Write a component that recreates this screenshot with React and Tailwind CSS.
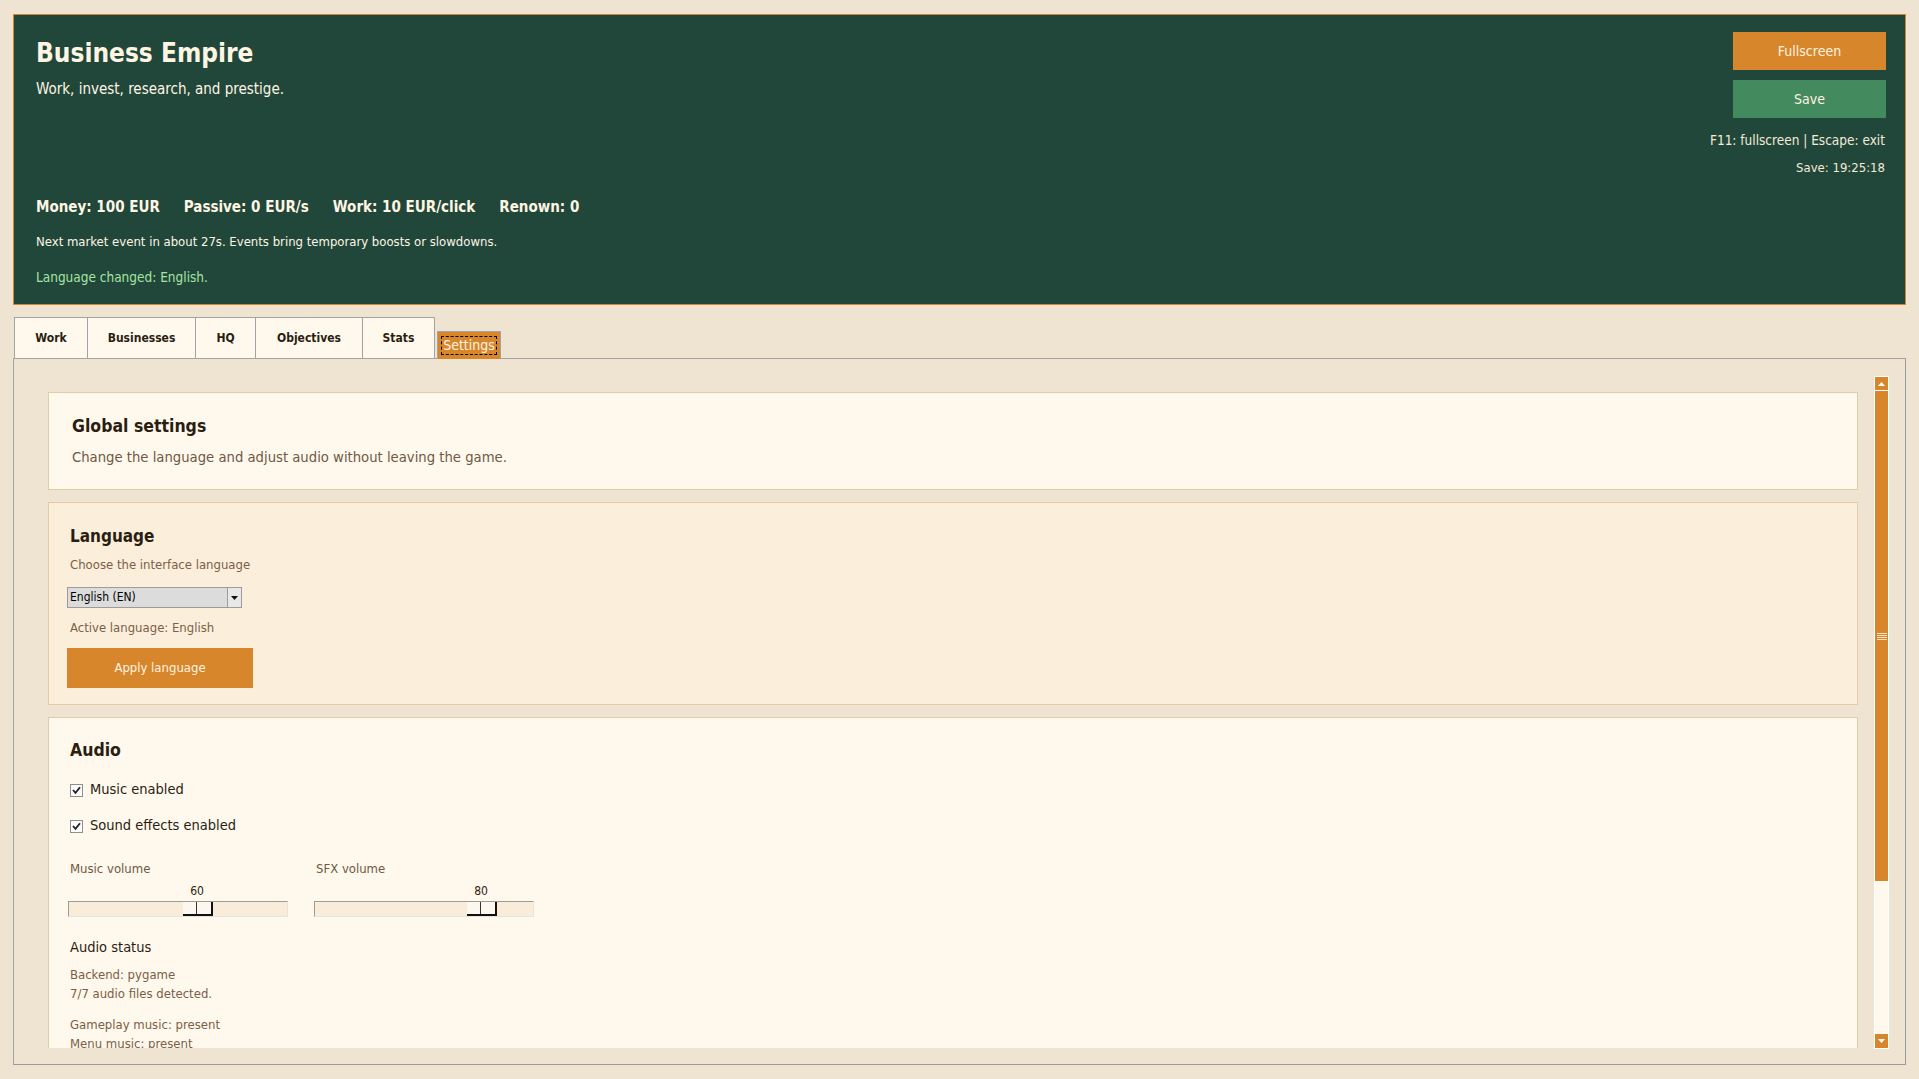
const F = "font-['DejaVu_Sans_Condensed','Liberation_Sans_Narrow','DejaVu_Sans',sans-serif]";

function Tab({ label, w }) {
    return (
        <div className={`h-[41px] ${w} flex items-center justify-center bg-[#fff8ec] border border-b-0 border-[#a3a3a3] -ml-px first:ml-0 text-[12px] font-bold text-[#2a1e12]`}>
            {label}
        </div>
    );
}

function Check({ label }) {
    return (
        <div className="flex items-center gap-[7px] h-[20px] pl-[2px]">
            <div className="w-[13px] h-[13px] bg-[#fbfbfb] border border-[#8f8f8f] flex items-center justify-center">
                <svg width="9" height="9" viewBox="0 0 9 9">
                    <path d="M1 4 L3.5 6.8 L8 1.2" fill="none" stroke="#222" strokeWidth="1.8" />
                </svg>
            </div>
            <span className="text-[14.5px] text-[#2a1e12]">{label}</span>
        </div>
    );
}

function Slider({ label, value, pos }) {
    return (
        <div className="w-[220px] flex flex-col">
            <div className="text-[13px] leading-[16px] text-[#6e5a45] pl-[2px]">{label}</div>
            <div className="relative h-[40px]">
                <div className="absolute top-[7px] -translate-x-1/2 text-[12px] leading-[14px] text-[#2a1e12]" style={{ left: pos + 15 }}>
                    {value}
                </div>
                <div className="absolute top-[24px] left-0 right-0 h-[16px] bg-[#f9ecd8] border-t border-l border-[#9c9c9c] border-r border-b border-r-[#e4e4e4] border-b-[#e4e4e4]">
                    <div className="absolute top-0 h-[14px] w-[30px] flex bg-[#fdf8ef] border-r-2 border-b-2 border-[#111]" style={{ left: pos }}>
                        <div className="w-[14px] h-full border-r border-[#333]"></div>
                    </div>
                </div>
            </div>
        </div>
    );
}

function Scrollbar() {
    return (
        <div className="w-[15px] flex flex-col bg-[#fff8ec] border border-white">
            <div className="h-[14px] bg-[#d8862b] flex items-center justify-center border-b border-white">
                <svg width="7" height="4" viewBox="0 0 7 4"><path d="M3.5 0 L7 4 L0 4 Z" fill="#fff" /></svg>
            </div>
            <div className="h-[490px] bg-[#d8862b] flex flex-col items-center justify-center gap-[1px]">
                <div className="w-[10px] h-px bg-[#fbe3c4]"></div>
                <div className="w-[10px] h-px bg-[#fbe3c4]"></div>
                <div className="w-[10px] h-px bg-[#fbe3c4]"></div>
                <div className="w-[10px] h-px bg-[#fbe3c4]"></div>
            </div>
            <div className="flex-1"></div>
            <div className="h-[14px] bg-[#d8862b] flex items-center justify-center">
                <svg width="7" height="4" viewBox="0 0 7 4"><path d="M0 0 L7 0 L3.5 4 Z" fill="#fff" /></svg>
            </div>
        </div>
    );
}

export default function App() {
    return (
        <div className={`${F} min-h-screen bg-[#efe4d1] pt-[14px] px-[13px] pb-[14px] flex flex-col`}>
            {/* header */}
            <header className="h-[291px] bg-[#21473b] border border-[#d8862b] flex justify-between pl-[22px] pr-[19px] pt-[17px]">
                <div className="flex flex-col text-[#fff5e3]">
                    <h1 className="mt-[3px] text-[26px] leading-[36px] font-bold">Business Empire</h1>
                    <p className="mt-[8px] text-[15px] leading-[20px]">Work, invest, research, and prestige.</p>
                    <div className="mt-[98px] flex gap-[24px] text-[15px] leading-[20px] font-bold">
                        <span>Money: 100 EUR</span>
                        <span>Passive: 0 EUR/s</span>
                        <span>Work: 10 EUR/click</span>
                        <span>Renown: 0</span>
                    </div>
                    <p className="mt-[15px] text-[13px] leading-[20px]">Next market event in about 27s. Events bring temporary boosts or slowdowns.</p>
                    <p className="mt-[15px] text-[13.5px] leading-[20px] text-[#a6e3a1]">Language changed: English.</p>
                </div>
                <div className="flex flex-col items-end">
                    <button className="w-[153px] h-[38px] bg-[#d8862b] text-[#fff3e0] text-[14px]">Fullscreen</button>
                    <button className="mt-[10px] w-[153px] h-[38px] bg-[#438a5e] text-[#fff3e0] text-[14px]">Save</button>
                    <p className="mt-[12px] text-[13.5px] leading-[20px] text-[#f3ead8] pr-px">F11: fullscreen | Escape: exit</p>
                    <p className="mt-[8px] text-[13px] leading-[20px] text-[#f3ead8] pr-px">Save: 19:25:18</p>
                </div>
            </header>

            {/* tabs */}
            <div className="mt-[12px] flex items-end pl-px">
                <Tab label="Work" w="w-[74px]" />
                <Tab label="Businesses" w="w-[109px]" />
                <Tab label="HQ" w="w-[61px]" />
                <Tab label="Objectives" w="w-[108px]" />
                <Tab label="Stats" w="w-[73px]" />
                <div className="ml-[2px] w-[64px] h-[28px] mb-[-1px] relative z-10 bg-[#d8862b] border border-b-0 border-[#a3a3a3] flex items-center justify-center">
                    <span className="border border-dashed border-black px-px text-[14px] leading-[17px] text-[#fff3e0]">Settings</span>
                </div>
            </div>

            {/* notebook panel */}
            <div className="flex-1 border border-[#a3a3a3] border-r-[#9a9a9a] border-b-[#9a9a9a] bg-[#efe4d1] flex pt-[17px] pb-[15px] pl-[17px] pr-[16px] gap-[16px]">
                <div className="flex-1 h-[672px] overflow-hidden pt-[16px] pl-[17px] flex flex-col gap-[12px]">
                    {/* global settings */}
                    <section className="shrink-0 h-[98px] bg-[#fff8ec] border border-[#e2cba5] pl-[23px] pt-[21px]">
                        <h2 className="text-[17.5px] leading-[24px] font-bold text-[#2a1e12]">Global settings</h2>
                        <p className="mt-[9px] text-[14.7px] leading-[20px] text-[#6e5a45]">Change the language and adjust audio without leaving the game.</p>
                    </section>

                    {/* language */}
                    <section className="shrink-0 h-[203px] bg-[#fbefdb] border border-[#e2cba5] pl-[18px] pt-[21px] flex flex-col">
                        <h2 className="pl-[3px] text-[17px] leading-[24px] font-bold text-[#2a1e12]">Language</h2>
                        <p className="pl-[3px] mt-[8px] text-[13px] leading-[18px] text-[#7a6048]">Choose the interface language</p>
                        <div className="mt-[13px] w-[175px] h-[21px] bg-[#dcdcdc] border border-[#9c9c9c] flex">
                            <div className="flex-1 pl-[2px] text-[12px] leading-[19px] text-black">English (EN)</div>
                            <div className="w-[14px] border-l border-[#9c9c9c] bg-[#e8e8e8] flex items-center justify-center">
                                <svg width="7" height="4" viewBox="0 0 7 4"><path d="M0 0 L7 0 L3.5 4 Z" fill="#111" /></svg>
                            </div>
                        </div>
                        <p className="pl-[3px] mt-[11px] text-[13px] leading-[18px] text-[#7a6048]">Active language: English</p>
                        <button className="mt-[11px] w-[186px] h-[40px] bg-[#d8862b] text-[#fff3e0] text-[13px]">Apply language</button>
                    </section>

                    {/* audio */}
                    <section className="shrink-0 h-[400px] bg-[#fff8ec] border border-[#e2cba5] pl-[19px] pt-[20px] flex flex-col">
                        <h2 className="pl-[2px] text-[17.5px] leading-[24px] font-bold text-[#2a1e12]">Audio</h2>
                        <div className="mt-[18px] flex flex-col gap-[16px]">
                            <Check label="Music enabled" />
                            <Check label="Sound effects enabled" />
                        </div>
                        <div className="mt-[25px] flex gap-[26px]">
                            <Slider label="Music volume" value="60" pos={114} />
                            <Slider label="SFX volume" value="80" pos={152} />
                        </div>
                        <h3 className="pl-[2px] mt-[20px] text-[14.5px] leading-[20px] text-[#2a1e12]">Audio status</h3>
                        <div className="pl-[2px] mt-[8px] text-[13px] leading-[19px] text-[#7a6048]">
                            <p>Backend: pygame</p>
                            <p>7/7 audio files detected.</p>
                            <p className="mt-[12px]">Gameplay music: present</p>
                            <p>Menu music: present</p>
                        </div>
                    </section>
                </div>
                <Scrollbar />
            </div>
        </div>
    );
}
